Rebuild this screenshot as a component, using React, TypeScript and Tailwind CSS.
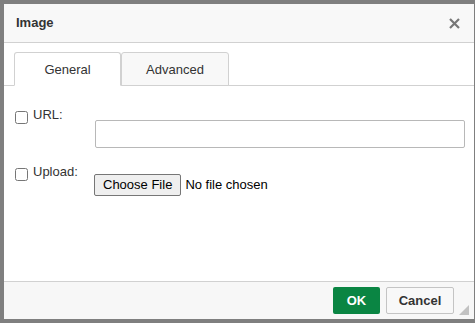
import { useState } from "react";

export default function App() {
  const [tab, setTab] = useState("general");
  const [useUrl, setUseUrl] = useState(false);
  const [useUpload, setUseUpload] = useState(false);

  return (
    <div
      className="w-[475px] h-[323px] bg-[#7f7f7f] pt-[4px] pl-[4px] overflow-hidden"
      style={{ fontFamily: "'Liberation Sans', Arial, sans-serif" }}
    >
      <div className="relative w-[470px] h-[315px] bg-white flex flex-col text-[13px] text-[#333]">
        {/* header */}
        <div className="h-[39px] shrink-0 bg-[#f8f8f8] border-b border-[#d1d1d1] flex items-center justify-between pl-[12px] pr-[14px]">
          <span className="font-bold">Image</span>
          <svg width="11" height="11" viewBox="0 0 11 11" className="text-[#777]">
            <path d="M1 1 L10 10 M10 1 L1 10" stroke="currentColor" strokeWidth="2.2" />
          </svg>
        </div>

        {/* tabs */}
        <div className="flex pt-[9px] pl-[10px] border-b border-[#d1d1d1] shrink-0">
          <button
            onClick={() => setTab("general")}
            className={
              "w-[107px] h-[34px] pt-px -mb-px border border-[#d1d1d1] rounded-t-[3px] " +
              (tab === "general" ? "bg-white border-b-white" : "bg-[#f8f8f8]")
            }
          >
            General
          </button>
          <button
            onClick={() => setTab("advanced")}
            className={
              "w-[108px] h-[34px] pt-px -mb-px border border-[#d1d1d1] rounded-t-[3px] " +
              (tab === "advanced" ? "bg-white border-b-white" : "bg-[#f8f8f8]")
            }
          >
            Advanced
          </button>
        </div>

        {/* fields */}
        <div className="flex-1 pl-[11px] pr-[9px] pt-[21px]">
          <div className="flex">
            <label className="w-[80px] shrink-0 flex items-start gap-[5px]">
              <input
                type="checkbox"
                checked={useUrl}
                onChange={(e) => setUseUrl(e.target.checked)}
                className="w-[13px] h-[13px] mt-[4px]"
              />
              <span className="leading-[15px]">URL:</span>
            </label>
            <input
              type="text"
              className="flex-1 h-[28px] mt-[13px] border border-[#b8b8b8] rounded-[2px] px-2 outline-none"
            />
          </div>

          <div className="flex mt-[16px]">
            <label className="w-[79px] shrink-0 flex items-start gap-[5px]">
              <input
                type="checkbox"
                checked={useUpload}
                onChange={(e) => setUseUpload(e.target.checked)}
                className="w-[13px] h-[13px] mt-[4px]"
              />
              <span className="leading-[15px]">Upload:</span>
            </label>
            <div className="flex items-center mt-[10px] text-[13px] text-black">
              <button className="h-[22px] px-[8px] bg-[#efefef] border border-[#767676] rounded-[2px]">
                Choose File
              </button>
              <span className="ml-[4px]">No file chosen</span>
            </div>
          </div>
        </div>

        {/* footer */}
        <div className="h-[38px] shrink-0 bg-[#f7f7f7] border-t border-[#d1d1d1] flex items-start justify-end gap-[6px] pt-[5px] pr-[20px]">
          <button className="w-[47px] h-[27px] bg-[#0a8543] text-white font-bold rounded-[2px]">
            OK
          </button>
          <button className="w-[68px] h-[27px] bg-[#f8f8f8] border border-[#c4c4c4] text-[#333] font-bold rounded-[2px]">
            Cancel
          </button>
        </div>

        {/* resize grip */}
        <svg width="10" height="10" viewBox="0 0 10 10" className="absolute right-[5px] bottom-[4px]">
          <path d="M10 0 L10 10 L0 10 Z" fill="#c2c2c2" />
        </svg>
      </div>
    </div>
  );
}
